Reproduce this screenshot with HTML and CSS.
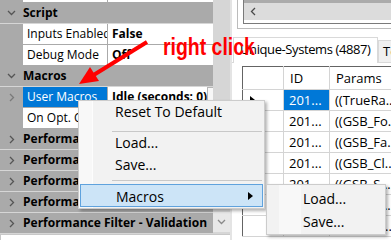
FILE: index.html
```html
<!DOCTYPE html>
<html lang="en">
<head>
  <meta charset="UTF-8" />
  <title>Property Grid - Macros</title>
  <link rel="stylesheet" href="styles.css">
</head>
<body>
  <div class="app">
    <div class="props">
      <div class="props-main">
        <div class="grid">
          <div class="row stub"><div class="mg"></div><div class="name"></div><div class="val"></div></div>
          <div class="cat"><div class="mg"><svg width="9" height="6" viewBox="0 0 9 6"><path d="M1 1l3.5 3.5L8 1" /></svg></div>Script</div>
          <div class="row"><div class="mg"></div><div class="name">Inputs Enabled</div><div class="val">False</div></div>
          <div class="row"><div class="mg"></div><div class="name">Debug Mode</div><div class="val">Off</div></div>
          <div class="cat"><div class="mg"><svg width="9" height="6" viewBox="0 0 9 6"><path d="M1 1l3.5 3.5L8 1" /></svg></div>Macros</div>
          <div class="row"><div class="mg light"><svg width="6" height="9" viewBox="0 0 6 9"><path d="M1 1l3.5 3.5L1 8" /></svg></div><div class="name sel">User Macros</div><div class="val">Idle (seconds: 0)<span class="btn"></span></div></div>
          <div class="row"><div class="mg"></div><div class="name">On Opt. Complete</div><div class="val">Off</div></div>
          <div class="cat"><div class="mg"><svg width="6" height="9" viewBox="0 0 6 9"><path d="M1 1l3.5 3.5L1 8" /></svg></div>Performance</div>
          <div class="cat"><div class="mg"><svg width="6" height="9" viewBox="0 0 6 9"><path d="M1 1l3.5 3.5L1 8" /></svg></div>Performance</div>
          <div class="cat"><div class="mg"><svg width="6" height="9" viewBox="0 0 6 9"><path d="M1 1l3.5 3.5L1 8" /></svg></div>Performance</div>
          <div class="cat"><div class="mg"><svg width="6" height="9" viewBox="0 0 6 9"><path d="M1 1l3.5 3.5L1 8" /></svg></div>Performance</div>
          <div class="cat"><div class="mg"><svg width="6" height="9" viewBox="0 0 6 9"><path d="M1 1l3.5 3.5L1 8" /></svg></div>Performance Filter - Validation</div>
        </div>
        <div class="vscroll">
          <div class="vbtn"><svg width="9" height="6" viewBox="0 0 9 6"><path d="M1 1l3.5 3.5L8 1" /></svg></div>
        </div>
      </div>
      <div class="desc"></div>
    </div>

    <div class="side">
      <div class="top-page">
        <div class="top-frame">
          <div class="strip"></div>
          <div class="hscroll"><svg width="6" height="9" viewBox="0 0 6 9"><path d="M5 1L1.5 4.5L5 8" /></svg></div>
        </div>
      </div>
      <div class="tabs">
        <div class="tab active">Unique-Systems (4887)</div>
        <div class="tab">Test</div>
      </div>
      <div class="page">
        <table class="dg">
          <colgroup><col class="c-hdr"><col class="c-id"><col class="c-par"></colgroup>
          <thead>
            <tr><th></th><th>ID</th><th>Params</th></tr>
          </thead>
          <tbody>
            <tr><td class="rh"><span class="cur"></span></td><td class="hit">201...</td><td>((TrueRa...</td></tr>
            <tr><td class="rh"></td><td>201...</td><td>((GSB_Fo...</td></tr>
            <tr><td class="rh"></td><td>201...</td><td>((GSB_Fa...</td></tr>
            <tr><td class="rh"></td><td>201...</td><td>((GSB_Cl...</td></tr>
            <tr><td class="rh"></td><td>201...</td><td>((GSB_S...</td></tr>
            <tr><td class="rh"></td><td>201...</td><td>((GSB_S...</td></tr>
            <tr><td class="rh"></td><td>201...</td><td>((GSB_St...</td></tr>
          </tbody>
        </table>
      </div>
    </div>
  </div>

  <svg class="arrow" width="391" height="240" viewBox="0 0 391 240">
    <line x1="147" y1="42" x2="92" y2="76" />
    <polygon points="79,84 90,67 99,81" />
  </svg>
  <div class="note">right click</div>

  <div class="menu main">
    <div class="item">Reset To Default</div>
    <div class="sep first"></div>
    <div class="item">Load...</div>
    <div class="item">Save...</div>
    <div class="sep"></div>
    <div class="item hot">Macros<span class="sub"></span></div>
  </div>
  <div class="menu submenu">
    <div class="item">Load...</div>
    <div class="item">Save...</div>
  </div>
</body>
</html>
```

FILE: styles.css
```css
* { box-sizing: border-box; }
body { margin: 0; width: 391px; height: 240px; overflow: hidden; position: relative; background: #fff; font-family: "Open Sans", sans-serif; color: #000; }
svg path { fill: none; stroke: #4a4a4a; stroke-width: 1.3; }

.app { display: flex; height: 240px; }

/* property grid */
.props { width: 230px; display: flex; flex-direction: column; }
.props-main { display: flex; height: 234px; }
.grid { width: 213px; background: #aaa; overflow: hidden; font-size: 12px; }
.row { display: flex; height: 21px; line-height: 20px; border-bottom: 1px solid #aaa; }
.row.stub { height: 3px; }
.mg { width: 23px; flex: none; display: flex; align-items: center; justify-content: center; }
.mg.light path { stroke: #7a7a7a; }
.name { width: 85px; flex: none; background: #fff; border-right: 1px solid #aaa; padding-left: 4px; white-space: nowrap; overflow: hidden; }
.name.sel { background: #0078d7; color: #fff; }
.val { flex: 1; display: flex; background: #fff; padding-left: 4px; font-weight: bold; white-space: nowrap; overflow: hidden; }
.btn { margin-left: auto; width: 15px; flex: none; background: #f7f7f7; border: 1px solid #b5b5b5; margin-right: 1px; }
.cat { display: flex; height: 21px; line-height: 20px; border-bottom: 1px solid #d6d6d6; font-weight: bold; white-space: nowrap; }
.cat .mg { height: 20px; }
.cat path { stroke: #555; }

.vscroll { width: 17px; background: #d6d6d6; display: flex; flex-direction: column; justify-content: flex-end; }
.vbtn { height: 20px; background: #e8e8e8; display: flex; align-items: center; justify-content: center; margin-bottom: 2px; }
.vbtn path { stroke: #8a8a8a; }
.desc { height: 6px; border-top: 1px solid #c8c8c8; border-left: 1px solid #c8c8c8; }

/* right side */
.side { flex: 1; border-left: 2px solid #e4e4e4; }
.top-page { height: 29px; margin-left: 5px; border-left: 1px solid #bcbcbc; border-bottom: 1px solid #bcbcbc; }
.top-frame { height: 24px; margin-left: 5px; border-left: 1px solid #7a7a7a; border-bottom: 1px solid #7a7a7a; }
.strip { height: 3px; background: #ababab; }
.hscroll { height: 17px; background: #dcdcdc; display: flex; align-items: center; padding-left: 6px; }

.tabs { display: flex; align-items: flex-end; margin-top: 8px; padding-left: 1px; height: 25px; font-size: 13px; }
.tab { height: 22px; line-height: 20px; padding: 0 4px; background: #f0f0f0; border: 1px solid #d9d9d9; border-bottom: none; white-space: nowrap; }
.tab.active { height: 26px; line-height: 23px; width: 145px; padding: 0 6px; letter-spacing: -0.4px; background: #fff; position: relative; top: 1px; }

.page { border-top: 1px solid #d9d9d9; padding: 3px 0 0 10px; }
.dg { border-collapse: collapse; table-layout: fixed; width: 230px; font-size: 13px; border-left: 1px solid #646464; border-top: 1px solid #646464; }
.c-hdr { width: 41px; }
.c-id { width: 46px; }
.dg th, .dg td { height: 21px; padding: 0 0 0 5px; text-align: left; font-weight: normal; white-space: nowrap; overflow: hidden; border-right: 1px solid #d4d4d4; border-bottom: 1px solid #d4d4d4; }
.dg th { height: 23px; padding-left: 6px; }
.dg td.hit { background: #0078d7; color: #fff; }
.rh { position: relative; }
.cur { position: absolute; left: 7px; top: 6px; border-left: 5px solid #000; border-top: 4px solid transparent; border-bottom: 4px solid transparent; }

/* annotation */
.arrow { position: absolute; left: 0; top: 0; }
.arrow line { stroke: #f00; stroke-width: 4; }
.arrow polygon { fill: #f00; }
.note { position: absolute; left: 163px; top: 33px; font-family: "Liberation Sans", sans-serif; font-weight: bold; font-size: 24px; line-height: normal; color: #f00; white-space: nowrap; transform: scaleX(0.81); transform-origin: 0 0; }

/* context menus */
.menu { position: absolute; background: #f2f2f2; border: 1px solid #ccc; box-shadow: 2px 2px 3px rgba(0, 0, 0, 0.3); font-size: 14px; }
.main { left: 78px; top: 100px; width: 187px; height: 109px; background: linear-gradient(to right, #f8f8f8 13px, #fdfdfd 13px, #fdfdfd 14px, #f2f2f2 14px); }
.item { position: relative; height: 22px; line-height: 22px; padding-left: 36px; }
.main .hot { height: 23px; line-height: 23px; margin: 0 1px; padding-left: 35px; background: #cce4f7; border: 1px solid #5fa2dd; }
.sep { height: 8px; margin: 0 2px 0 33px; border-top: 1px solid transparent; }
.sep::after { content: ""; display: block; height: 1px; margin-top: 3px; background: #c8c8c8; }
.sep.first { height: 9px; }
.sep.first::after { margin-top: 7px; }
.sub { position: absolute; right: 9px; top: 7px; border-left: 5px solid #000; border-top: 4px solid transparent; border-bottom: 4px solid transparent; }
.submenu { left: 266px; top: 184px; width: 120px; height: 51px; padding-top: 2px; background: linear-gradient(to right, #f2f2f2 12px, #f8f8f8 12px, #f8f8f8 34px, #f2f2f2 34px); }
.submenu .item { height: 23px; line-height: 23px; }
```
